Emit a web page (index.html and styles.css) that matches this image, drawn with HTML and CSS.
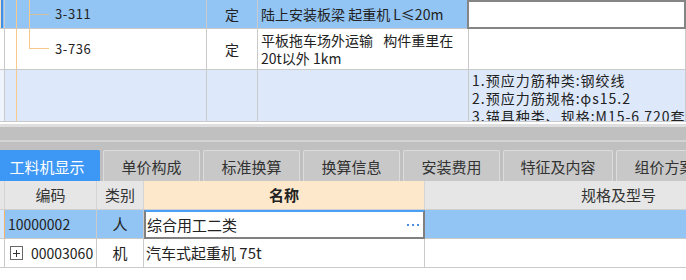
FILE: index.html
```html
<!DOCTYPE html>
<html lang="zh-CN">
<head>
<meta charset="utf-8">
<title>工料机显示</title>
<link rel="stylesheet" href="styles.css">
</head>
<body>
<div class="top">
  <div class="c ind ind-sel"></div>
  <div class="c tree t1">3-311</div>
  <div class="c ctr sel">定</div>
  <div class="c name sel">陆上安装板梁 起重机 L≤20m</div>
  <div class="c edit-top"></div>

  <div class="c ind"></div>
  <div class="c tree t2">3-736</div>
  <div class="c ctr">定</div>
  <div class="c name wrap">平板拖车场外运输&ensp; 构件重里在<br>20t以外 1km</div>
  <div class="c"></div>

  <div class="c ind ind-lt"></div>
  <div class="c tree t3"></div>
  <div class="c lt"></div>
  <div class="c lt"></div>
  <div class="c lt feat">1.预应力筋种类:钢绞线<br>2.预应力筋规格:φs15.2<br>3.锚具种类、规格:M15-6 720套</div>
</div>
<div class="gap"></div>
<div class="bar"></div>
<div class="tabs">
  <div class="tab tab-first active">工料机显示</div>
  <div class="tab">单价构成</div>
  <div class="tab">标准换算</div>
  <div class="tab">换算信息</div>
  <div class="tab">安装费用</div>
  <div class="tab tab-wide">特征及内容</div>
  <div class="tab">组价方案</div>
</div>
<div class="bot">
  <div class="c h"></div>
  <div class="c h">编码</div>
  <div class="c h">类别</div>
  <div class="c h hn">名称</div>
  <div class="c h">规格及型号</div>

  <div class="c bind-sel"></div>
  <div class="c sel code">10000002</div>
  <div class="c sel ctr">人</div>
  <div class="c edit-name">综合用工二类<span class="dots"></span></div>
  <div class="c sel"></div>

  <div class="c"></div>
  <div class="c code"><span class="plus"></span>00003060</div>
  <div class="c ctr">机</div>
  <div class="c name-b">汽车式起重机 75t</div>
  <div class="c"></div>
</div>
</body>
</html>
```
FILE: styles.css
```css
html, body {
  margin: 0;
  padding: 0;
}
body {
  width: 686px;
  height: 280px;
  overflow: hidden;
  background: #ffffff;
  font-family: "Noto Sans CJK SC", "Noto Sans", sans-serif;
  color: #222222;
}
.c {
  box-sizing: border-box;
  border-right: 1px solid #cacaca;
  border-bottom: 1px solid #cacaca;
  display: flex;
  align-items: center;
  overflow: hidden;
  white-space: nowrap;
  line-height: 18px;
}
.top {
  display: grid;
  grid-template-columns: 5px 202px 51px 211px 217px;
  grid-template-rows: 29px 41px 52px;
  font-size: 14px;
}
.sel { background: #92c5f4; }
.lt { background: #dde9fb; }
.ctr { justify-content: center; }
.name { padding-left: 3px; }
.wrap { white-space: normal; }
.ind { background: #ffffff; }
.ind-sel {
  background: linear-gradient(to right, #fbe2c0 0 1px, #3d8fe8 1px 3px, #92c5f4 3px);
}
.ind-lt { background: #eef3fc; }
.tree {
  padding-left: 50px;
  font-size: 13px;
  letter-spacing: 0.6px;
}
.t1 {
  background:
    linear-gradient(#f8c98b, #f8c98b) 11px 0 / 1px 100% no-repeat,
    linear-gradient(#f8c98b, #f8c98b) 24px 0 / 1px 100% no-repeat,
    linear-gradient(#d5bf9c, #d5bf9c) 24px 14px / 20px 1px no-repeat,
    #92c5f4;
}
.t2 {
  background:
    linear-gradient(#f8c98b, #f8c98b) 11px 0 / 1px 100% no-repeat,
    linear-gradient(#f8c98b, #f8c98b) 24px 0 / 1px 20px no-repeat,
    linear-gradient(#f8c98b, #f8c98b) 24px 19px / 20px 1px no-repeat,
    #ffffff;
}
.t3 {
  background:
    linear-gradient(#f8c98b, #f8c98b) 11px 0 / 1px 100% no-repeat,
    #dde9fb;
}
.edit-top {
  background: #ffffff;
  border: 2px solid #858585;
  margin-left: -2px;
}
.feat {
  display: block;
  align-self: stretch;
  font-size: 14px;
  letter-spacing: 1px;
  line-height: 18px;
  padding: 1px 2px 0 3px;
  color: #222222;
}
.gap {
  height: 2px;
  background: #ffffff;
}
.bar {
  box-sizing: border-box;
  height: 18px;
  background: #c0c0c0;
  border-top: 3px solid #dedede;
  border-bottom: 2px solid #d4d4d4;
}
.tabs {
  display: flex;
  gap: 3px;
  background: #c0c0c0;
  padding-top: 8px;
  height: 39px;
  box-sizing: border-box;
  overflow: hidden;
}
.tab {
  flex: 0 0 97px;
  box-sizing: border-box;
  height: 31px;
  display: flex;
  align-items: center;
  justify-content: center;
  background: #c8c8c8;
  border: 1px solid #dcdcdc;
  border-bottom: none;
  border-radius: 2px 2px 0 0;
  font-size: 15px;
  color: #333333;
  white-space: nowrap;
}
.tab-first {
  flex-basis: 106px;
  margin-left: -6px;
}
.tab-wide { flex-basis: 110px; }
.tab.active {
  background: #3d97f5;
  border-color: #3d97f5;
  color: #ffffff;
}
.bot {
  display: grid;
  grid-template-columns: 5px 92px 47px 281px 388px;
  grid-template-rows: 29px 29px 29px;
  font-size: 15px;
}
.h {
  background: #e6e6e6;
  justify-content: center;
  border-right-color: #d4d4d4;
  border-bottom-color: #d0d0d0;
  color: #333333;
}
.hn {
  background: #fee8cc;
  font-weight: bold;
  color: #222222;
}
.bind-sel {
  background: #d6e8fa;
  border-right: 1px solid #f3b46a;
}
.code {
  padding-left: 3px;
  font-size: 14px;
}
.edit-name {
  background: #ffffff;
  border: 2px solid #808080;
  border-top: 2px solid #4aa0f2;
  padding-left: 1px;
}
.dots {
  margin-left: auto;
  margin-right: 4px;
  width: 12px;
  height: 2px;
  background: repeating-linear-gradient(to right, #4a90e2 0 2px, transparent 2px 5px);
}
.name-b { padding-left: 2px; }
.plus {
  display: inline-block;
  box-sizing: border-box;
  width: 13px;
  height: 14px;
  border: 1px solid #666666;
  background:
    linear-gradient(#333333, #333333) center / 7px 1px no-repeat,
    linear-gradient(#333333, #333333) center / 1px 7px no-repeat,
    #ffffff;
  margin-left: 2px;
  margin-right: 8px;
}
```
